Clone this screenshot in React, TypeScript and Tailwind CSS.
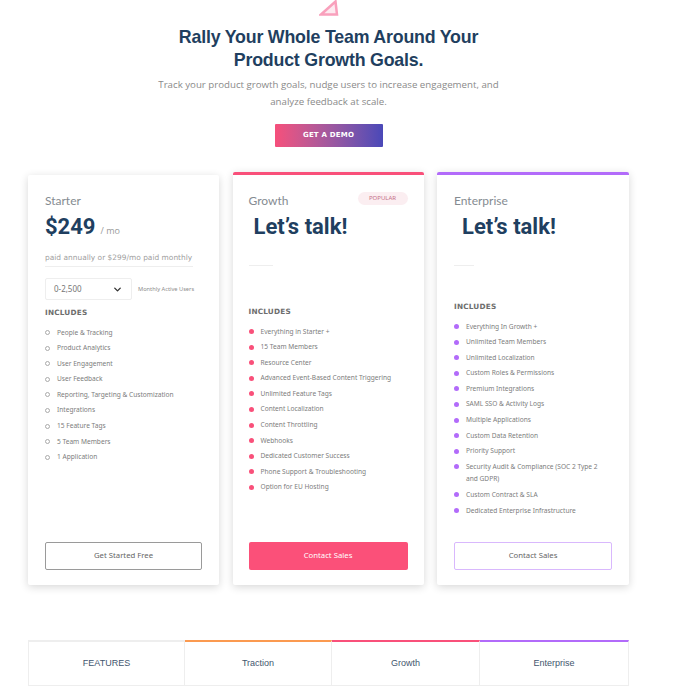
import { ChevronDown } from 'lucide-react';

const starter = ['People & Tracking', 'Product Analytics', 'User Engagement', 'User Feedback', 'Reporting, Targeting & Customization', 'Integrations', '15 Feature Tags', '5 Team Members', '1 Application'];
const growth = ['Everything in Starter +', '15 Team Members', 'Resource Center', 'Advanced Event-Based Content Triggering', 'Unlimited Feature Tags', 'Content Localization', 'Content Throttling', 'Webhooks', 'Dedicated Customer Success', 'Phone Support & Troubleshooting', 'Option for EU Hosting'];
const enterprise = ['Everything In Growth +', 'Unlimited Team Members', 'Unlimited Localization', 'Custom Roles & Permissions', 'Premium Integrations', 'SAML SSO & Activity Logs', 'Multiple Applications', 'Custom Data Retention', 'Priority Support', 'Security Audit & Compliance (SOC 2 Type 2 and GDPR)', 'Custom Contract & SLA', 'Dedicated Enterprise Infrastructure'];

const FeatureList = ({ items, bullet }: { items: string[]; bullet: string }) => (
  <ul className="mt-[7.5px] flex flex-col gap-[3.1px] pr-[8px]">
    {items.map((item) => (
      <li key={item} className="flex gap-[7px] font-['Noto_Sans',sans-serif] text-[6.6px] leading-[12.5px] text-[#7c7c7c]">
        <span className={`mt-[3.5px] h-[5px] w-[5px] shrink-0 rounded-full ${bullet}`} />
        <span>{item}</span>
      </li>
    ))}
  </ul>
);

const Includes = () => (
  <div className="font-['DejaVu_Sans',sans-serif] text-[7.3px] leading-[12px] font-bold tracking-[0.2px] text-[#6d6d6d]">INCLUDES</div>
);

const PlanName = ({ children }: { children: string }) => (
  <div className="font-['Lato',sans-serif] text-[12px] leading-[16px] text-[#858b91]">{children}</div>
);

const Talk = ({ indent }: { indent: string }) => (
  <div className={`mt-[3px] font-['Roboto',sans-serif] text-[22px] leading-[30px] font-bold text-[#1f3f60] ${indent}`}>Let’s talk!</div>
);

const App = () => {
  return (
    <div className="relative h-[687px] w-[700px] overflow-hidden bg-white font-['Liberation_Sans',sans-serif]">
      <svg className="absolute left-[319px] top-0" width="20" height="17" viewBox="0 0 20 17" fill="none">
        <path d="M2 14.5 L16.5 1.5 L18 14.5 Z" stroke="#f9a0bc" strokeWidth="2.5" fill="#fdeaf0" />
      </svg>

      <header className="flex w-[657px] flex-col items-center pt-[26px]">
        <h1 className="text-center text-[17.8px] leading-[23px] font-bold tracking-[-0.2px] text-[#1f3f60]">
          Rally Your Whole Team Around Your<br />Product Growth Goals.
        </h1>
        <p className="mt-[4px] text-center font-['Open_Sans',sans-serif] text-[9.7px] leading-[17px] text-[#8a8a8a]">
          Track your product growth goals, nudge users to increase engagement, and<br />analyze feedback at scale.
        </p>
        <button className="mt-[14px] h-[23px] w-[108px] rounded-[1px] bg-gradient-to-r from-[#f64f7b] to-[#4a48b8] font-['DejaVu_Sans',sans-serif] text-[7px] font-bold tracking-[0.2px] text-white">
          GET A DEMO
        </button>
      </header>

      <main className="mx-[28px] mt-[25px] grid w-[601px] grid-cols-[191px_191px_192px] items-end gap-x-[13.5px]">
        <section className="flex h-[410px] flex-col rounded-[2px] bg-white px-[17px] pt-[18px] shadow-[0_2px_8px_rgba(0,0,0,0.16)]">
          <PlanName>Starter</PlanName>
          <div className="mt-[3px] flex items-baseline gap-[5px]">
            <span className="font-['Roboto',sans-serif] text-[22px] leading-[30px] font-bold text-[#1f3f60]">$249</span>
            <span className="font-['Open_Sans',sans-serif] text-[9px] text-[#9a9a9a]">/ mo</span>
          </div>
          <div className="mt-[9.5px] w-[148px] border-b border-[#eeeeee] pb-[3px] font-['DejaVu_Sans',sans-serif] text-[7.45px] leading-[11px] whitespace-nowrap text-[#a0a0a0]">paid annually or $299/mo paid monthly</div>
          <div className="mt-[11.5px] flex items-center gap-[6px]">
            <div className="flex h-[22px] w-[87px] items-center justify-between rounded-[2px] border border-[#eeeeee] px-[8px] font-['Noto_Sans',sans-serif] text-[8px] text-[#777777]">
              0-2,500
              <ChevronDown className="h-[11px] w-[11px] text-[#333333]" strokeWidth={3} />
            </div>
            <span className="font-['Noto_Sans',sans-serif] text-[5.7px] whitespace-nowrap text-[#8d8d8d]">Monthly Active Users</span>
          </div>
          <div className="mt-[7px]"><Includes /></div>
          <FeatureList items={starter} bullet="border border-[#aaaaaa] bg-white" />
          <button className="mt-auto mb-[15px] h-[28px] w-full rounded-[2px] border-[1.5px] border-[#9a9a9a] bg-white font-['Noto_Sans',sans-serif] text-[7.75px] text-[#666666]">Get Started Free</button>
        </section>

        <section className="relative flex h-[413px] flex-col rounded-[2px] border-t-[3px] border-[#f9507a] bg-white px-[16px] pt-[18px] shadow-[0_2px_8px_rgba(0,0,0,0.16)]">
          <span className="absolute top-[17px] right-[16px] flex h-[13px] w-[50px] items-center justify-center rounded-full bg-[#fbeef1] font-['Noto_Sans',sans-serif] text-[6px] text-[#c5708a]">POPULAR</span>
          <PlanName>Growth</PlanName>
          <Talk indent="ml-[5px]" />
          <div className="mt-[23px] h-px w-[24px] bg-[#eeeeee]" />
          <div className="mt-[40px]"><Includes /></div>
          <FeatureList items={growth} bullet="bg-[#f9507a]" />
          <button className="mt-auto mb-[15px] h-[28px] w-full rounded-[2px] bg-[#fb5079] font-['Noto_Sans',sans-serif] text-[7.75px] text-white">Contact Sales</button>
        </section>

        <section className="flex h-[413px] flex-col rounded-[2px] border-t-[3px] border-[#b26bfa] bg-white px-[17px] pt-[18px] shadow-[0_2px_8px_rgba(0,0,0,0.16)]">
          <PlanName>Enterprise</PlanName>
          <Talk indent="ml-[8px]" />
          <div className="mt-[23px] h-px w-[20px] bg-[#eeeeee]" />
          <div className="mt-[35px]"><Includes /></div>
          <FeatureList items={enterprise} bullet="bg-[#b26bfa]" />
          <button className="mt-auto mb-[15px] h-[28px] w-full rounded-[2px] border-[1.5px] border-[#d9b8fd] bg-white font-['Noto_Sans',sans-serif] text-[7.75px] text-[#666666]">Contact Sales</button>
        </section>
      </main>

      <div className="mx-[28px] mt-[55px] grid h-[46px] w-[601px] grid-cols-[157px_147px_148px_149px] border-b border-[#eeeeee] text-[9px] text-[#3f566e]">
        <div className="flex items-center justify-center border-x border-t-2 border-[#eeeeee]">FEATURES</div>
        <div className="flex items-center justify-center border-t-2 border-r border-[#eeeeee] border-t-[#fb9a50]">Traction</div>
        <div className="flex items-center justify-center border-t-2 border-r border-[#eeeeee] border-t-[#f9507a]">Growth</div>
        <div className="flex items-center justify-center border-t-2 border-r border-[#eeeeee] border-t-[#b26bfa]">Enterprise</div>
      </div>
    </div>
  );
};

export default App;
